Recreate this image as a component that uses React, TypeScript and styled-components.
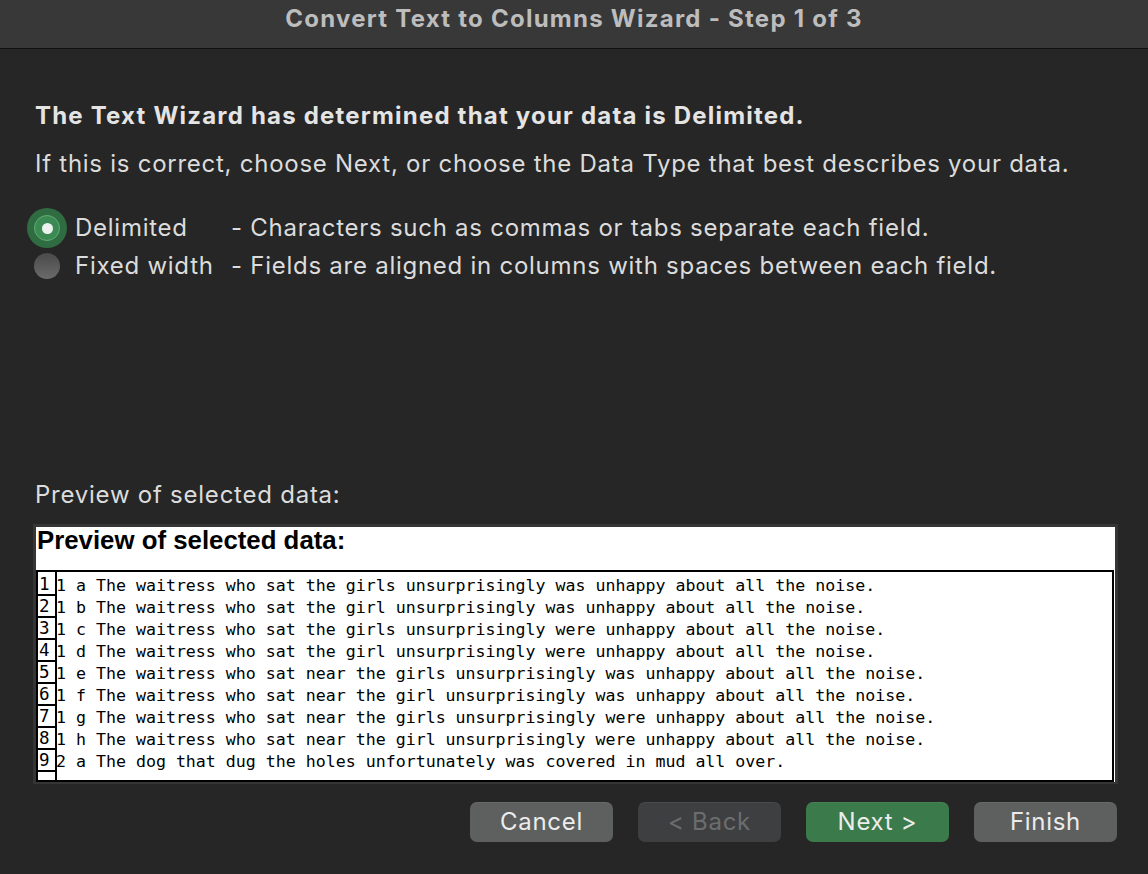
import React from "react";
import styled, { createGlobalStyle } from "styled-components";

const Global = createGlobalStyle`
  html, body { margin: 0; padding: 0; background: #262626; }
  body { font-family: Inter, "Liberation Sans", sans-serif; }
  * { box-sizing: border-box; }
`;

const Window = styled.div`
  width: 1148px;
  height: 874px;
  background: #262626;
  display: flex;
  flex-direction: column;
  overflow: hidden;
`;

const TitleBar = styled.div`
  height: 49px;
  flex: none;
  background: #383838;
  border-bottom: 1px solid #111;
  display: flex;
  align-items: center;
  justify-content: center;
  color: #bdbdbd;
  font-weight: 700;
  font-size: 24px;
  letter-spacing: 1.25px;
  padding-bottom: 11px;
`;

const Content = styled.div`
  flex: 1;
  display: flex;
  flex-direction: column;
  padding: 0 30px 0 35px;
`;

const Heading = styled.div`
  margin-top: 52px;
  font-weight: 700;
  font-size: 24px;
  line-height: 30px;
  color: #e4e4e4;
  letter-spacing: 1.2px;
`;

const Para = styled.div`
  margin-top: 18px;
  font-size: 24px;
  line-height: 30px;
  color: #dcdcdc;
  letter-spacing: 0.74px;
`;

const Options = styled.div`
  margin-top: 34px;
  margin-left: -1px;
  display: grid;
  grid-template-columns: 41px 156px auto;
  row-gap: 8px;
  align-items: center;
`;

const RadioWrap = styled.div`
  width: 26px;
  height: 30px;
  display: flex;
  align-items: center;
  justify-content: center;
`;

const Radio = styled.div<{ $on?: boolean }>`
  width: 26px;
  height: 26px;
  flex: none;
  border-radius: 50%;
  display: flex;
  align-items: center;
  justify-content: center;
  background: ${(p) =>
    p.$on ? "#3c8a53" : "linear-gradient(#4a4a4a, #6a6a6a)"};
  border: ${(p) => (p.$on ? "1px solid #5fae74" : "none")};
  box-shadow: ${(p) => (p.$on ? "0 0 0 7px #2f6c41" : "none")};
  &::after {
    content: "";
    display: ${(p) => (p.$on ? "block" : "none")};
    width: 11px;
    height: 11px;
    border-radius: 50%;
    background: #eef2ee;
  }
`;

const OptLabel = styled.div`
  font-size: 24px;
  line-height: 30px;
  color: #dcdcdc;
  letter-spacing: 0.74px;
  white-space: nowrap;
`;

const PreviewLabel = styled.div`
  margin-top: 199px;
  font-size: 24px;
  line-height: 30px;
  color: #dcdcdc;
  letter-spacing: 0.76px;
`;

const PreviewFrame = styled.div`
  margin-top: 14px;
  margin-left: -2px;
  width: 1085px;
  border: 3px solid #353535;
  border-bottom-width: 2px;
  background: #fff;
`;

const PreviewHeader = styled.div`
  height: 43px;
  padding: 0 0 0 1px;
  font-family: "Liberation Sans", Arial, sans-serif;
  font-weight: 700;
  font-size: 25.8px;
  line-height: 27px;
  color: #000;
`;

const DataArea = styled.div`
  height: 212px;
  border: 2px solid #000;
  margin-right: 1px;
  overflow: hidden;
`;

const Row = styled.div<{ $h?: number }>`
  display: grid;
  grid-template-columns: 19px 1fr;
  height: ${(p) => p.$h ?? 22}px;
`;

const NumCell = styled.div`
  border-right: 2px solid #000;
  border-bottom: 2px solid #000;
  font-family: "DejaVu Sans Mono", "Liberation Mono", monospace;
  font-size: 17.5px;
  line-height: 20px;
  padding-top: 2px;
  color: #000;
  padding-left: 1px;
  overflow: hidden;
`;

const DataCell = styled.div`
  font-family: "DejaVu Sans Mono", "Liberation Mono", monospace;
  font-size: 16.6px;
  line-height: 20px;
  padding-top: 4px;
  color: #000;
  white-space: pre;
  margin-left: -1px;
`;

const Buttons = styled.div`
  margin-top: 18px;
  display: flex;
  justify-content: flex-end;
  gap: 25px;
  padding-right: 1px;
`;

const Button = styled.button<{ $variant?: "default" | "disabled" | "primary" }>`
  width: 143px;
  height: 40px;
  border: none;
  border-radius: 7px;
  font-family: Inter, "Liberation Sans", sans-serif;
  font-size: 24px;
  letter-spacing: 0.7px;
  padding: 0 0 2px;
  background: ${(p) =>
    p.$variant === "primary"
      ? "#3a7a4b"
      : p.$variant === "disabled"
      ? "#3e3f41"
      : "#5e5f5f"};
  color: ${(p) => (p.$variant === "disabled" ? "#6c6d6e" : "#ececec")};
  box-shadow: 0 1px 0 rgba(255, 255, 255, 0.06) inset;
`;

const rows = [
  "1 a The waitress who sat the girls unsurprisingly was unhappy about all the noise.",
  "1 b The waitress who sat the girl unsurprisingly was unhappy about all the noise.",
  "1 c The waitress who sat the girls unsurprisingly were unhappy about all the noise.",
  "1 d The waitress who sat the girl unsurprisingly were unhappy about all the noise.",
  "1 e The waitress who sat near the girls unsurprisingly was unhappy about all the noise.",
  "1 f The waitress who sat near the girl unsurprisingly was unhappy about all the noise.",
  "1 g The waitress who sat near the girls unsurprisingly were unhappy about all the noise.",
  "1 h The waitress who sat near the girl unsurprisingly were unhappy about all the noise.",
  "2 a The dog that dug the holes unfortunately was covered in mud all over.",
];

export default function App() {
  return (
    <Window>
      <Global />
      <TitleBar>Convert Text to Columns Wizard - Step 1 of 3</TitleBar>
      <Content>
        <Heading>The Text Wizard has determined that your data is Delimited.</Heading>
        <Para>
          If this is correct, choose Next, or choose the Data Type that best describes your data.
        </Para>
        <Options>
          <RadioWrap>
            <Radio $on />
          </RadioWrap>
          <OptLabel>Delimited</OptLabel>
          <OptLabel>- Characters such as commas or tabs separate each field.</OptLabel>
          <RadioWrap>
            <Radio />
          </RadioWrap>
          <OptLabel>Fixed width</OptLabel>
          <OptLabel>- Fields are aligned in columns with spaces between each field.</OptLabel>
        </Options>
        <PreviewLabel>Preview of selected data:</PreviewLabel>
        <PreviewFrame>
          <PreviewHeader>Preview of selected data:</PreviewHeader>
          <DataArea>
            {rows.map((r, i) => (
              <Row key={i}>
                <NumCell>{i + 1}</NumCell>
                <DataCell>{r}</DataCell>
              </Row>
            ))}
            <Row $h={12}>
              <NumCell />
              <DataCell />
            </Row>
          </DataArea>
        </PreviewFrame>
        <Buttons>
          <Button>Cancel</Button>
          <Button $variant="disabled">&lt; Back</Button>
          <Button $variant="primary">Next &gt;</Button>
          <Button>Finish</Button>
        </Buttons>
      </Content>
    </Window>
  );
}
